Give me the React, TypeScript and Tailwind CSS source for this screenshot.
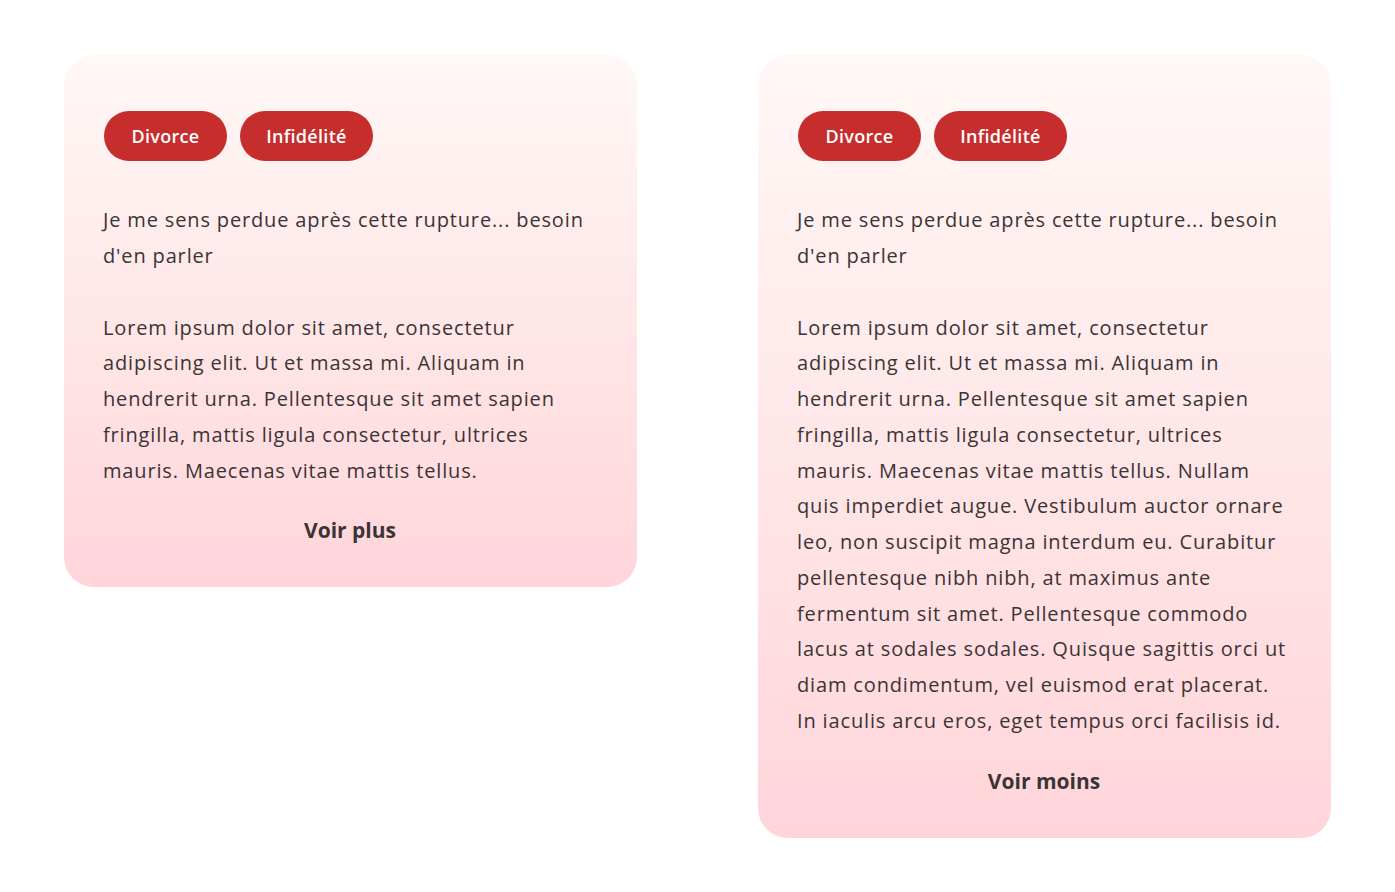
import React from "react";

const intro = ["Je me sens perdue après cette rupture... besoin", "d'en parler"];

const shortLines = [
  "Lorem ipsum dolor sit amet, consectetur",
  "adipiscing elit. Ut et massa mi. Aliquam in",
  "hendrerit urna. Pellentesque sit amet sapien",
  "fringilla, mattis ligula consectetur, ultrices",
  "mauris. Maecenas vitae mattis tellus.",
];

const longLines = [
  "Lorem ipsum dolor sit amet, consectetur",
  "adipiscing elit. Ut et massa mi. Aliquam in",
  "hendrerit urna. Pellentesque sit amet sapien",
  "fringilla, mattis ligula consectetur, ultrices",
  "mauris. Maecenas vitae mattis tellus. Nullam",
  "quis imperdiet augue. Vestibulum auctor ornare",
  "leo, non suscipit magna interdum eu. Curabitur",
  "pellentesque nibh nibh, at maximus ante",
  "fermentum sit amet. Pellentesque commodo",
  "lacus at sodales sodales. Quisque sagittis orci ut",
  "diam condimentum, vel euismod erat placerat.",
  "In iaculis arcu eros, eget tempus orci facilisis id.",
];

function Lines({ lines }: { lines: string[] }) {
  return (
    <>
      {lines.map((l, i) => (
        <span key={i} className="block whitespace-nowrap">
          {l}
        </span>
      ))}
    </>
  );
}

function Card({ lines, label }: { lines: string[]; label: string }) {
  return (
    <div className="flex-1 rounded-[30px] bg-gradient-to-b from-[#fff8f6] to-[#ffd5da] pl-[39px] pr-[40px] pt-[56px] pb-[43px]">
      <div className="flex gap-[13px] pl-[1px]">
        <span className="flex h-[50px] w-[123px] items-center justify-center rounded-full bg-[#c62d2d] text-[18px] font-semibold tracking-[0.3px] text-white">
          Divorce
        </span>
        <span className="flex h-[50px] w-[133px] items-center justify-center rounded-full bg-[#c62d2d] text-[18px] font-semibold tracking-[0.3px] text-white">
          Infidélité
        </span>
      </div>
      <div className="mt-[41px] text-[20px] leading-[35.75px] tracking-[0.85px] text-[#3b3434]">
        <p>
          <Lines lines={intro} />
        </p>
        <p className="mt-[36px]">
          <Lines lines={lines} />
        </p>
      </div>
      <div className="mt-[28px] text-center text-[21px] font-bold leading-[28px] text-[#3b3434]">
        {label}
      </div>
    </div>
  );
}

export default function App() {
  return (
    <div
      className="flex min-h-[892px] items-start gap-[121px] bg-white px-16 pt-[55px]"
      style={{ fontFamily: "'Open Sans', Lato, sans-serif" }}
    >
      <Card lines={shortLines} label="Voir plus" />
      <Card lines={longLines} label="Voir moins" />
    </div>
  );
}
